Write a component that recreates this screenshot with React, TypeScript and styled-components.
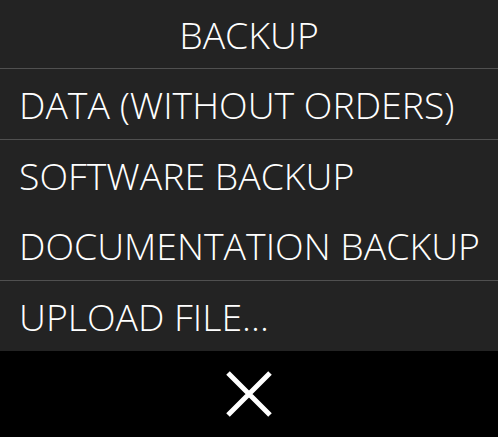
import React from "react";
import styled, { createGlobalStyle } from "styled-components";

const GlobalStyle = createGlobalStyle`
  html, body {
    margin: 0;
    padding: 0;
    background: #000;
  }
  body {
    font-family: "Open Sans", "Liberation Sans", sans-serif;
  }
`;

const items = [
  { label: "DATA (WITHOUT ORDERS)", divider: true },
  { label: "SOFTWARE BACKUP", divider: false },
  { label: "DOCUMENTATION BACKUP", divider: true },
  { label: "UPLOAD FILE...", divider: false },
];

const App = () => {
  return (
    <>
      <GlobalStyle />
      <Panel>
        <Header>BACKUP</Header>
        {items.map((item) => (
          <Row key={item.label} $divider={item.divider}>
            {item.label}
          </Row>
        ))}
        <Footer>
          <CloseButton aria-label="Close">
            <svg width="48" height="48" viewBox="0 0 48 48">
              <path
                d="M3 3 L45 45 M45 3 L3 45"
                stroke="#fff"
                strokeWidth="5"
                fill="none"
              />
            </svg>
          </CloseButton>
        </Footer>
      </Panel>
    </>
  );
};

export default App;

const Panel = styled.div`
  width: 498px;
  height: 437px;
  display: flex;
  flex-direction: column;
  background: #232323;
  color: #fff;
  font-weight: 300;
  font-size: 37.4px;
`;

const Header = styled.div`
  height: 68px;
  display: flex;
  align-items: center;
  justify-content: center;
  border-bottom: 1px solid #505050;
`;

const Row = styled.div<{ $divider: boolean }>`
  height: 70px;
  display: flex;
  align-items: center;
  padding-left: 19px;
  white-space: nowrap;
  border-bottom: ${(p) => (p.$divider ? "1px solid #505050" : "none")};
  box-sizing: content-box;
`;

const Footer = styled.div`
  flex: 1;
  background: #000;
  display: flex;
  align-items: center;
  justify-content: center;
`;

const CloseButton = styled.button`
  border: none;
  background: transparent;
  padding: 0;
  display: flex;
  cursor: pointer;
`;
